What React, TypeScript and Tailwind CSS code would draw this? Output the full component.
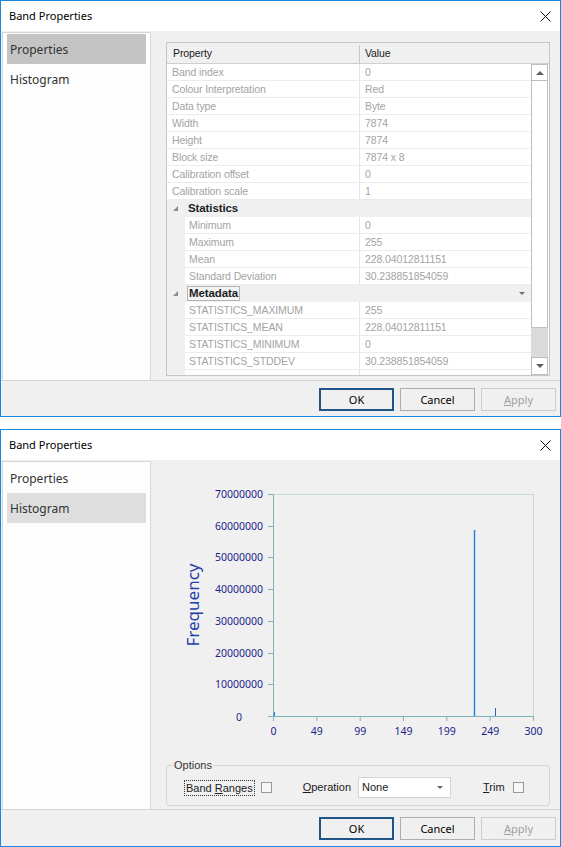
import type { ReactNode } from "react";

type Row = { name: string; value: string };

const TOP_ROWS: Row[] = [
  { name: "Band index", value: "0" },
  { name: "Colour Interpretation", value: "Red" },
  { name: "Data type", value: "Byte" },
  { name: "Width", value: "7874" },
  { name: "Height", value: "7874" },
  { name: "Block size", value: "7874 x 8" },
  { name: "Calibration offset", value: "0" },
  { name: "Calibration scale", value: "1" },
];

const STAT_ROWS: Row[] = [
  { name: "Minimum", value: "0" },
  { name: "Maximum", value: "255" },
  { name: "Mean", value: "228.04012811151" },
  { name: "Standard Deviation", value: "30.238851854059" },
];

const META_ROWS: Row[] = [
  { name: "STATISTICS_MAXIMUM", value: "255" },
  { name: "STATISTICS_MEAN", value: "228.04012811151" },
  { name: "STATISTICS_MINIMUM", value: "0" },
  { name: "STATISTICS_STDDEV", value: "30.238851854059" },
];

const Y_TICKS = [
  { label: "70000000", y: 34 },
  { label: "60000000", y: 66 },
  { label: "50000000", y: 97 },
  { label: "40000000", y: 129 },
  { label: "30000000", y: 161 },
  { label: "20000000", y: 193 },
  { label: "10000000", y: 224 },
];

const X_TICKS = ["0", "49", "99", "149", "199", "249", "300"];

function TitleBar() {
  return (
    <div className="flex h-[30px] shrink-0 items-center justify-between bg-white pl-[8px] pr-[9px]">
      <span className="font-['Noto_Sans',sans-serif] text-[11px] text-black">Band Properties</span>
      <svg width="11" height="11" viewBox="0 0 11 11" aria-hidden="true">
        <path d="M0.5 0.5L10.5 10.5M10.5 0.5L0.5 10.5" stroke="#111" strokeWidth="1" />
      </svg>
    </div>
  );
}

function Sidebar({ active }: { active: "properties" | "histogram" }) {
  const item =
    "flex h-[30px] items-center pl-[3px] pt-[2px] font-['Noto_Sans',sans-serif] text-[12px] text-[#333]";
  return (
    <div className="ml-[1px] mt-[1px] flex w-[149px] shrink-0 flex-col border border-b-0 border-[#d6d6d6] bg-[#fdfdfd] px-[4px] pt-[1px]">
      <div className={`${item} ${active === "properties" ? "bg-[#c4c4c4]" : ""}`}>Properties</div>
      <div className={`${item} ${active === "histogram" ? "bg-[#dedede]" : ""}`}>Histogram</div>
    </div>
  );
}

function Button({ children, kind }: { children: ReactNode; kind?: "default" | "disabled" }) {
  const border =
    kind === "default"
      ? "border-2 border-[#1f5587] text-black"
      : kind === "disabled"
        ? "border border-[#cccccc] text-[#a0a0a0]"
        : "border border-[#adadad] text-black";
  return (
    <div
      className={`flex h-[23px] w-[75px] items-center justify-center bg-[#f0f0f0] pt-[1px] font-['Noto_Sans',sans-serif] text-[11px] ${border}`}
    >
      {children}
    </div>
  );
}

function ButtonRow({ height }: { height: string }) {
  return (
    <div className={`flex shrink-0 items-start justify-end gap-[6px] bg-[#f0f0f0] pr-[4px] pt-[7px] ${height}`}>
      <Button kind="default">OK</Button>
      <Button>Cancel</Button>
      <Button kind="disabled">
        <span>
          <u>A</u>pply
        </span>
      </Button>
    </div>
  );
}

function PlainRow({ row }: { row: Row }) {
  return (
    <div className="flex h-[17px] shrink-0 border-b border-[#ececec] bg-white leading-[16px]">
      <div className="w-[193px] shrink-0 border-r border-[#e4e4e4] pl-[5px]">{row.name}</div>
      <div className="flex-1 pl-[5px]">{row.value}</div>
    </div>
  );
}

function ChildRow({ row }: { row: Row }) {
  return (
    <div className="flex h-[17px] shrink-0 leading-[16px]">
      <div className="w-[18px] shrink-0 bg-[#f0f0f0]" />
      <div className="flex flex-1 border-b border-[#ececec] bg-white">
        <div className="w-[175px] shrink-0 border-r border-[#e4e4e4] pl-[4px]">{row.name}</div>
        <div className="flex-1 pl-[5px]">{row.value}</div>
      </div>
    </div>
  );
}

function CategoryRow({ label, focused }: { label: string; focused?: boolean }) {
  return (
    <div className="flex h-[17px] shrink-0 items-center bg-[#f0f0f0] pl-[6px]">
      <svg width="5" height="5" viewBox="0 0 5 5" aria-hidden="true">
        <polygon points="5,0 5,5 0,5" fill="#8c8c8c" />
      </svg>
      {focused ? (
        <span className="ml-[9px] border border-[#b4b4b4] bg-[#f4f4f4] px-[1px] text-[11.5px] leading-[13px] font-bold text-[#1e1e1e]">
          {label}
        </span>
      ) : (
        <span className="ml-[10px] text-[11.5px] font-bold text-[#1e1e1e]">{label}</span>
      )}
      {focused && (
        <svg className="ml-auto mr-[6px]" width="6" height="3" viewBox="0 0 6 3" aria-hidden="true">
          <polygon points="0,0 6,0 3,3" fill="#707070" />
        </svg>
      )}
    </div>
  );
}

function ScrollBar() {
  return (
    <div className="flex w-[17px] shrink-0 flex-col">
      <div className="flex h-[17px] shrink-0 items-center justify-center border border-[#bdbdbd] bg-white">
        <svg width="8" height="4" viewBox="0 0 8 4" aria-hidden="true">
          <polygon points="0,4 4,0 8,4" fill="#606060" />
        </svg>
      </div>
      <div className="h-[247px] shrink-0 border border-t-0 border-[#c2c2c2] bg-white" />
      <div className="flex-1 bg-[#dadada]" />
      <div className="flex h-[18px] shrink-0 items-center justify-center border border-[#bdbdbd] bg-white">
        <svg width="8" height="4" viewBox="0 0 8 4" aria-hidden="true">
          <polygon points="0,0 8,0 4,4" fill="#606060" />
        </svg>
      </div>
    </div>
  );
}

function PropertyGrid() {
  return (
    <div className="flex h-[334px] w-[384px] flex-col border border-[#c6c6c6] bg-white font-['Liberation_Sans',Arial,sans-serif] text-[10.5px] tracking-[-0.1px] text-[#a3a3a3]">
      <div className="flex h-[21px] shrink-0 border-b border-[#cfcfcf] bg-[#f0f0f0] pt-[2px] text-[#1a1a1a]">
        <div className="flex w-[193px] items-center border-r border-[#c8c8c8] pl-[6px]">Property</div>
        <div className="flex flex-1 items-center pl-[5px]">Value</div>
      </div>
      <div className="flex h-[311px] shrink-0">
        <div className="flex w-[364px] shrink-0 flex-col overflow-hidden">
          {TOP_ROWS.map((r) => (
            <PlainRow key={r.name} row={r} />
          ))}
          <CategoryRow label="Statistics" />
          {STAT_ROWS.map((r) => (
            <ChildRow key={r.name} row={r} />
          ))}
          <CategoryRow label="Metadata" focused />
          {META_ROWS.map((r) => (
            <ChildRow key={r.name} row={r} />
          ))}
          <ChildRow row={{ name: "", value: "" }} />
        </div>
        <ScrollBar />
      </div>
    </div>
  );
}

function HistogramChart() {
  const xPos = (i: number) => 122 + i * 43.33;
  return (
    <svg width="409" height="298" viewBox="0 0 409 298" className="shrink-0" aria-label="Histogram">
      <line x1="122" y1="34.5" x2="382" y2="34.5" stroke="#c8dcdf" strokeWidth="1" />
      <line x1="382.5" y1="34" x2="382.5" y2="256" stroke="#c8d6da" strokeWidth="1" />
      <line x1="122.5" y1="34" x2="122.5" y2="257" stroke="#7db3b6" strokeWidth="1" />
      <line x1="117" y1="256.5" x2="383" y2="256.5" stroke="#7db3b6" strokeWidth="1" />
      {Y_TICKS.map((t) => (
        <g key={t.label}>
          <line x1="117" y1={t.y + 0.5} x2="122" y2={t.y + 0.5} stroke="#7db3b6" strokeWidth="1" />
          <text
            x="112"
            y={t.y + 0.5}
            dy="0.36em"
            textAnchor="end"
            fontFamily="Noto Sans, sans-serif"
            fontSize="10.5"
            fill="#1c1c8c"
          >
            {t.label}
          </text>
        </g>
      ))}
      <text x="91" y="257" dy="0.36em" textAnchor="end" fontFamily="Noto Sans, sans-serif" fontSize="10.5" fill="#1c1c8c">
        0
      </text>
      {X_TICKS.map((label, i) => (
        <g key={label}>
          <line
            x1={xPos(i) + 0.5}
            y1="256"
            x2={xPos(i) + 0.5}
            y2="261"
            stroke="#7db3b6"
            strokeWidth="1"
          />
          <text
            x={xPos(i) + 0.5}
            y="271"
            dy="0.36em"
            textAnchor="middle"
            fontFamily="Noto Sans, sans-serif"
            fontSize="10.5"
            fill="#1c1c8c"
          >
            {label}
          </text>
        </g>
      ))}
      <line x1="123.5" y1="252" x2="123.5" y2="256" stroke="#1f7fe0" strokeWidth="1" />
      <line x1="323.5" y1="70" x2="323.5" y2="256" stroke="#1f7fe0" strokeWidth="1.4" />
      <line x1="344.5" y1="248" x2="344.5" y2="256" stroke="#2f62c0" strokeWidth="1" />
      <text
        transform="translate(48 145) rotate(-90)"
        textAnchor="middle"
        fontFamily="Noto Sans, sans-serif"
        fontSize="17"
        fill="#2340a6"
      >
        Frequency
      </text>
    </svg>
  );
}

function Checkbox() {
  return <div className="h-[11px] w-[11px] shrink-0 border border-[#9a9a9a] bg-[#f7f7f7]" />;
}

function OptionsGroup() {
  return (
    <fieldset className="ml-[15px] h-[48px] w-[384px] rounded-[3px] border border-[#d5d5d5] font-['Liberation_Sans',Arial,sans-serif] text-[11px] text-[#1a1a1a]">
      <legend className="ml-[6px] px-[1px] leading-[14px] text-[#333]">Options</legend>
      <div className="mt-[5px] flex h-[21px] items-center pl-[17px]">
        <span className="border border-dotted border-[#333] px-[1px] leading-[14px]">
          Band <u>R</u>anges
        </span>
        <div className="ml-[6px]">
          <Checkbox />
        </div>
        <span className="ml-[31px]">
          <u>O</u>peration
        </span>
        <div className="ml-[7px] flex h-[21px] w-[93px] shrink-0 items-center border border-[#d4d4d4] bg-white pl-[3px]">
          <span>None</span>
          <svg className="ml-auto mr-[7px]" width="6" height="3" viewBox="0 0 6 3" aria-hidden="true">
            <polygon points="0,0 6,0 3,3" fill="#666" />
          </svg>
        </div>
        <span className="ml-[32px]">
          <u>T</u>rim
        </span>
        <div className="ml-[8px]">
          <Checkbox />
        </div>
      </div>
    </fieldset>
  );
}

function Dialog({
  children,
  active,
  buttonHeight,
}: {
  children: ReactNode;
  active: "properties" | "histogram";
  buttonHeight: string;
}) {
  return (
    <div className="flex w-[561px] shrink-0 flex-col border border-[#1c86d9] bg-[#f0f0f0]">
      <TitleBar />
      <div className="flex h-[350px] shrink-0 border-b border-[#d4d4d4] bg-[#f0f0f0]">
        <Sidebar active={active} />
        <div className="flex flex-1 flex-col">{children}</div>
      </div>
      <ButtonRow height={buttonHeight} />
    </div>
  );
}

export default function App() {
  return (
    <div className="flex h-[847px] w-[561px] flex-col overflow-hidden bg-white">
      <Dialog active="properties" buttonHeight="h-[35px]">
        <div className="pl-[15px] pt-[11px]">
          <PropertyGrid />
        </div>
      </Dialog>
      <div className="h-[12px] shrink-0" />
      <Dialog active="histogram" buttonHeight="h-[36px]">
        <HistogramChart />
        <OptionsGroup />
      </Dialog>
    </div>
  );
}
